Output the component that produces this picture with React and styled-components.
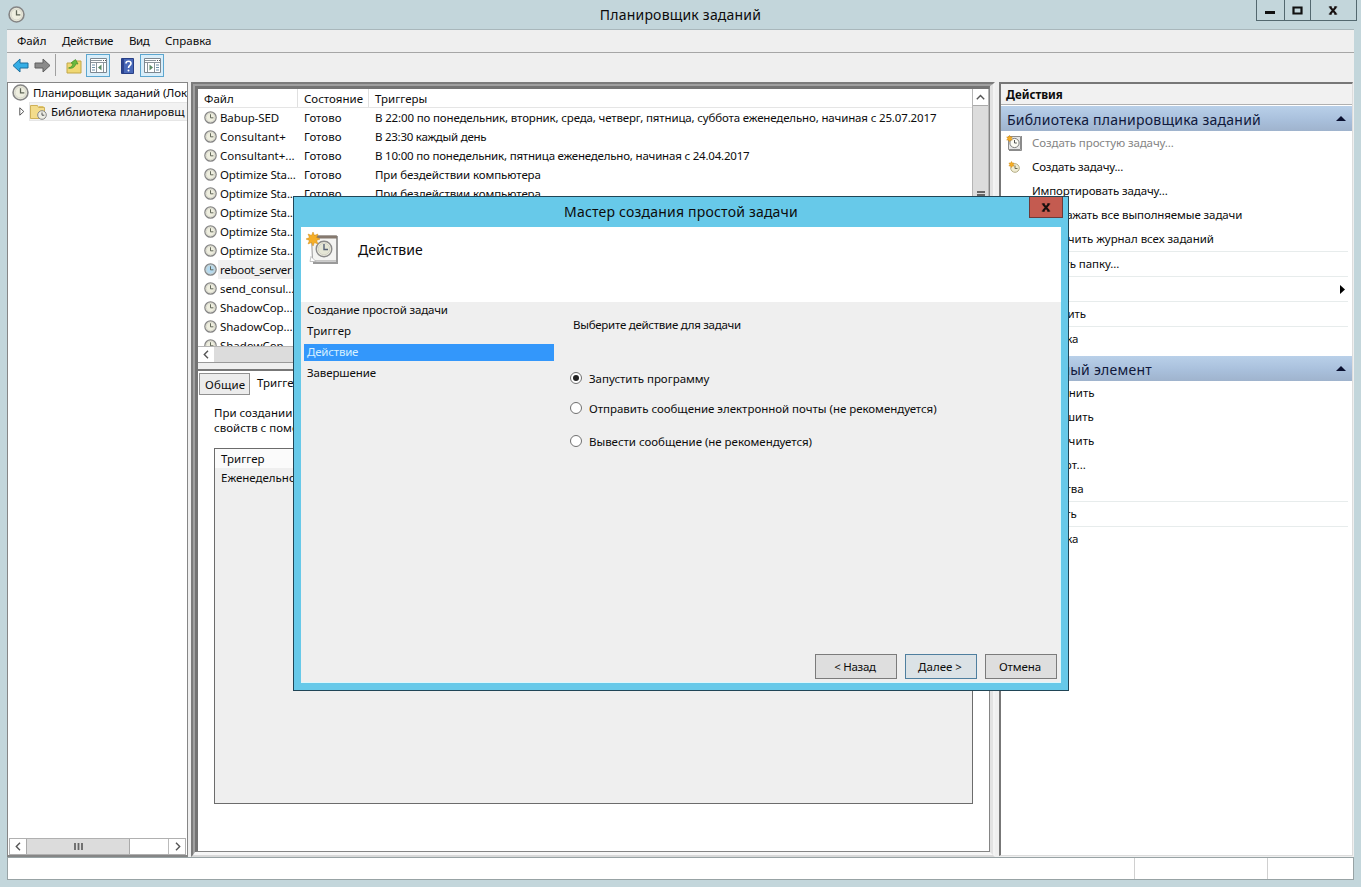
import React from 'react';
import styled, { createGlobalStyle, css } from 'styled-components';

const Global = createGlobalStyle`
  * { box-sizing: border-box; }
  html, body { margin: 0; width: 1361px; height: 887px; overflow: hidden; }
  body { font-family: 'Noto Sans', 'Open Sans', sans-serif; font-size: 11.5px; color: #0c0c0c; }
`;

const Window = styled.div`
  position: relative; width: 1361px; height: 887px; background: #c3d6db;
  padding: 0 7px 7px; overflow: hidden;
  display: flex; flex-direction: column;
`;
const TitleBar = styled.header`
  height: 29px; display: flex; flex: none; align-items: flex-start; justify-content: space-between;
`;
const TitleIcon = styled.div`width: 98px; padding: 6px 0 0 1px; line-height: 0;`;
const Title = styled.h1`
  margin: 5px 0 0; font-size: 14px; line-height: 20px; font-weight: 400; letter-spacing: 0.2px; white-space: nowrap;
`;
const Controls = styled.div`
  display: flex; height: 21px; width: 101px; margin-right: -3px; border: 1px solid #53686f; border-top: 0;
`;
const Control = styled.div`
  width: ${p => p.$w}px; height: 20px; display: flex; justify-content: center; align-items: center;
  & + & { border-left: 1px solid #53686f; }
`;
const Client = styled.div`
  width: 1347px; height: 851px; flex: none; background: #efefef;
  border-top: 1px solid #a9b7bb; display: flex; flex-direction: column;
`;
const MenuBar = styled.nav`
  height: 23px; flex: none; display: flex; padding-left: 10px; gap: 16px; line-height: 22px;
  border-bottom: 1px solid #a6a6a6;
`;
const MenuItem = styled.span`width: ${p => p.$w}px; letter-spacing: ${p => p.$ls || 0}px; white-space: nowrap;`;
const ToolBar = styled.div`
  height: 29px; flex: none; display: flex; align-items: flex-start; padding: 1px 0 0 4px;
`;
const Tool = styled.div`
  width: ${p => p.$w}px; height: 23px; display: flex; align-items: center; justify-content: center; flex: none;
  margin-right: ${p => p.$mr || 0}px;
  ${p => p.$on && css`background: #d9eefa; border: 1px solid #5ca6cf;`}
`;
const ToolRule = styled.div`width: 1px; height: 22px; background: #a0a0a0; margin-right: 10px;`;

const Panes = styled.div`height: 775px; flex: none; display: flex;`;
const Tree = styled.aside`
  width: 181px; height: 775px; flex: none; background: #fff; border: 1px solid #868686; border-bottom-width: 2px;
  display: flex; flex-direction: column; overflow: hidden;
`;
const TreeRow = styled.div`
  height: 19px; flex: none; display: flex; align-items: center; white-space: nowrap;
  padding-left: ${p => p.$indent}px; letter-spacing: ${p => p.$ls || 0}px;
  svg { flex: none; margin-right: ${p => p.$gap}px; }
`;
const TreeSel = styled.div`
  flex: 1; height: 19px; display: flex; align-items: center; background: #f2f2f2;
  border: 1px solid #e6e6e6; border-right: 0;
`;
const TreeScroll = styled.div`
  margin: auto 1px 0; height: 17px; display: flex; border: 1px solid #b0b0b0; flex: none;
`;
const ScrollArrow = styled.div`
  width: 16px; flex: none; display: flex; align-items: center; justify-content: center; background: #fff;
`;
const Thumb = styled.div`
  width: ${p => p.$w}px; background: #dcdcdc; border: solid #aaa; border-width: 0 1px;
  display: flex; align-items: center; justify-content: center;
`;
const Gap = styled.div`flex: 1; border-right: 1px solid #bbb;`;

const Frame = styled.main`
  width: 804px; height: 775px; flex: none; margin-left: 3px; background: #efefef;
  border: 2px solid; border-color: #7c7c7c #f3f3f3 #d9d9d9 #7c7c7c;
`;
const FrameMid = styled.div`
  height: 100%; border: solid; border-width: 2px 3px 3px 2px; border-color: #a0a0a0 #e2e2e2 #f6f6f6 #a0a0a0;
`;
const FrameIn = styled.div`
  height: 100%; border: solid; border-width: 3px 1px 1px 3px; border-color: #747474 #858585 #858585 #747474;
  display: flex; flex-direction: column; background: #efefef;
`;
const ListPane = styled.section`
  height: 274px; flex: none; background: #fff; display: flex; flex-direction: column;
  border-bottom: 1px solid #999;
`;
const ListTop = styled.div`height: 257px; display: flex; overflow: hidden; flex: none;`;
const Table = styled.div`width: 774px; flex: none; overflow: hidden;`;
const HeadRow = styled.div`height: 19px; display: flex; border-bottom: 1px solid #e5e5e5;`;
const HeadCell = styled.div`
  width: ${p => p.$w}px; padding-left: 6px; line-height: 19px; border-right: ${p => p.$last ? 0 : '1px solid #e0e0e0'};
  letter-spacing: ${p => p.$ls || 0}px; white-space: nowrap;
`;
const Row = styled.div`height: 19px; display: flex; align-items: center; line-height: 19px; white-space: nowrap;`;
const Cell = styled.div`
  width: ${p => p.$w}px; height: 19px; padding-left: ${p => p.$pl}px; flex: none; letter-spacing: ${p => p.$ls || 0}px;
  background: ${p => p.$sel ? '#efefef' : 'transparent'};
`;
const RowIcon = styled.div`width: 20px; height: 19px; padding: 3px 0 0 6px; line-height: 0; flex: none;`;
const VScroll = styled.div`width: 17px; background: #dcdcdc; border-left: 1px solid #b5b5b5; border-right: 1px solid #b5b5b5;`;
const VArrow = styled.div`height: 17px; background: #fff; border-bottom: 1px solid #aaa; display: flex; align-items: center; justify-content: center;`;
const VGrip = styled.div`margin: 85px auto 0; width: 8px; height: 7px; background: repeating-linear-gradient(#666 0 2px, transparent 2px 3px);`;
const HScroll = styled.div`height: 16px; display: flex; background: #dcdcdc; border-top: 1px solid #b5b5b5;`;
const DetailPane = styled.section`
  margin-top: 6px; flex: 1; background: #fff; border-top: 2px solid #777; display: flex; flex-direction: column;
`;
const Tabs = styled.div`height: 24px; display: flex; align-items: flex-end; padding-left: 1px; flex: none;`;
const Tab = styled.div`
  height: ${p => p.$active ? 24 : 22}px; line-height: ${p => p.$active ? 24 : 21}px; width: ${p => p.$w}px;
  padding-left: ${p => p.$active ? 7 : 5}px; letter-spacing: ${p => p.$ls || 0}px; white-space: nowrap;
  background: ${p => p.$active ? '#fff' : '#ececec'}; border: ${p => p.$active ? 0 : '1px solid #909090'};
`;
const Note = styled.p`margin: 10px 0 1px 16px; line-height: 15px; white-space: nowrap;`;
const Triggers = styled.div`
  margin: 12px 0 0 16px; width: 759px; height: 356px; border: 1px solid #6c6c6c; background: #efefef; line-height: 19px;
`;
const TriggerLine = styled.div`padding-left: 6px; height: 19px; background: ${p => p.$head ? '#fbfbfb' : 'none'};`;

const Actions = styled.aside`
  width: 354px; height: 774px; margin-left: 4px; flex: none; background: #fff; display: flex; flex-direction: column;
  border: solid; border-width: 2px 1px 1px 2px; border-color: #777 #ddd #ddd #777;
`;
const ActionsTitle = styled.h2`
  margin: 0; height: 21px; flex: none; padding-left: 5px; font-size: 11.5px; line-height: 22px; background: #f1f1f1; border-bottom: 1px solid #b0b0b0;
`;
const Group = styled.h3`
  margin: ${p => p.$mt}px 0 0; height: 25px; flex: none; padding: 2px 6px 0 6px; font-size: 14px; font-weight: 400; line-height: 23px;
  display: flex; justify-content: space-between; align-items: center; color: #10183a; letter-spacing: ${p => p.$ls}px;
  background: linear-gradient(#b9d0e9, #a9c0dc 55%, #9fb3cd);
  svg { margin-top: -2px; }
`;
const Action = styled.div`
  height: ${p => p.$line ? 25 : 24}px; flex: none; display: flex; align-items: center; margin-right: 4px;
  border-bottom: ${p => p.$line ? '1px solid #e7ecec' : 0}; color: ${p => p.$off ? '#858585' : '#0c0c0c'};
  letter-spacing: ${p => p.$ls || 0}px; white-space: nowrap; justify-content: space-between;
`;
const ActionText = styled.span`display: flex; align-items: center; height: 22px; line-height: 22px;`;
const ActionIcon = styled.span`width: 31px; display: inline-flex; padding-left: 5px;`;
const StatusBar = styled.footer`
  height: 23px; flex: none; background: #fff; border: 1px solid #98a3a5; display: flex; justify-content: flex-end;
`;
const StatusCell = styled.div`width: ${p => p.$w}px; border-left: 1px solid #d0d0d0;`;

const Dialog = styled.div`
  position: absolute; left: 293px; top: 196px; width: 776px; height: 495px; background: #67c9e9;
  border: 1px solid #204556; padding: 0 7px 7px; display: flex; flex-direction: column;
`;
const DialogTop = styled.div`height: 30px; flex: none; display: flex; justify-content: center;`;
const DialogClose = styled.div`
  position: absolute; right: 5px; top: 0; width: 34px; height: 21px; background: #c45b50; border: 1px solid #6d3a3a; border-top: 0;
  display: flex; align-items: center; justify-content: center;
`;
const DialogHead = styled.div`height: 75px; flex: none; background: #fff; display: flex; padding: 5px 0 0 5px;`;
const DialogHeadText = styled.h2`margin: 7px 0 0 19px; font-size: 14px; font-weight: 400; line-height: 22px; letter-spacing: 0.05px;`;
const DialogBody = styled.div`
  flex: 1; background: #efefef; display: grid; grid-template-columns: 262px 1fr; grid-template-rows: 1fr 33px;
  border: solid #dff7fb; border-width: 0 1px 1px 0;
`;
const Steps = styled.div`padding: 0 0 0 3px; display: flex; flex-direction: column;`;
const Step = styled.div`
  width: 250px; height: 17px; margin-bottom: 4px; line-height: 16px; padding-left: 3px; letter-spacing: ${p => p.$ls}px;
  ${p => p.$on && css`background: #3397fb; color: #d5f0ff;`}
`;
const Choices = styled.div`padding-top: 14px; display: flex; flex-direction: column;`;
const Prompt = styled.div`padding-left: 10px; line-height: 18px; letter-spacing: ${p => p.$ls}px;`;
const Choice = styled.label`
  display: flex; align-items: center; gap: 7px; height: 18px; line-height: 18px; margin: ${p => p.$mt}px 0 0 7px; white-space: nowrap;
  letter-spacing: -0.03px;
`;
const Radio = styled.span`
  width: 12px; height: 12px; border-radius: 50%; border: 1px solid #707070; background: #fff; margin-top: -2px;
  display: flex; align-items: center; justify-content: center;
  &::after { content: ''; width: 6px; height: 6px; border-radius: 50%; background: ${p => p.$on ? '#222' : 'transparent'}; }
`;
const Buttons = styled.div`grid-column: 1 / 3; display: flex; justify-content: flex-end; gap: 8px; padding: 5px 3px 0 0;`;
const Button = styled.button`
  width: ${p => p.$w}px; height: 25px; padding: 0 2px 0 0; font: inherit; color: #0c0c0c; border-radius: 0; letter-spacing: ${p => p.$ls || 0}px;
  border: 1px solid ${p => p.$main ? '#4f7f9f' : '#7b7b7b'}; background: ${p => p.$main ? '#dbe2e6' : '#dedede'};
`;

const Clock = ({ s = 13, face = '#eeeedf', rim = '#858585' }) => (
  <svg width={s} height={s} viewBox="0 0 16 16">
    <circle cx="8" cy="8" r="7" fill={face} stroke={rim} strokeWidth="1.5" />
    <circle cx="8" cy="8" r="5.2" fill="none" stroke="#cfcfc4" strokeWidth="0.8" />
    <path d="M8 4v4.400h3.600" fill="none" stroke="#5f6557" strokeWidth="1.200" />
  </svg>
);
const Arrow = ({ back }) => (
  <svg width="17" height="15" viewBox="0 0 17 15">
    <path d={back ? 'M1 7.500 8 1v4h8v5H8v4z' : 'M16 7.500 9 1v4H1v5h8v4z'} fill={back ? '#35aee6' : '#8a8a8a'} stroke={back ? '#1d6f9e' : '#5e5e5e'} />
  </svg>
);
const FolderUp = () => (
  <svg width="16" height="16" viewBox="0 0 16 16">
    <path d="M1 5h5l1.500-2H15v12H1z" fill="#f0d873" stroke="#c2a748" />
    <path d="M2.500 10c2.500-.5 4-2 4.500-4.500L5 5l4.500-3.500L12 6 9.800 5.800C9 9 6.500 11 2.500 10z" fill="#68bb3e" stroke="#3f8c29" strokeWidth=".7" />
  </svg>
);
const PaneIcon = ({ right }) => (
  <svg width="17" height="15" viewBox="0 0 17 15">
    <path d="M.5.5h16v14H.5z" fill="#fff" stroke="#7d8790" />
    <path d="M1 2.500h11M1 4.500h15" stroke="#8c959b" />
    <path d="M13 2.500h1M15 2.500h1" stroke="#555" />
    {right
      ? <><path d="M3.500 5v9M10.500 5v9" stroke="#8a949b" /><path d="M12 7h3M12 9.500h3M12 12h3" stroke="#6b8ea5" /><path d="M5.500 6.500v6l3.500-3z" fill="#5b8a65" /></>
      : <><path d="M6.500 5v9M13.500 5v9" stroke="#8a949b" /><path d="M2 7h3M2 9.500h3M2 12h3" stroke="#6b8ea5" /><path d="M11.500 6.500v6L8 9.500z" fill="#5b8a65" /></>}
  </svg>
);
const Help = () => (
  <svg width="13" height="16" viewBox="0 0 13 16">
    <path d="M.5.5h12v15H.5z" fill="#4868b8" stroke="#283f86" />
    <path d="M1 1h2v14H1z" fill="#2c4490" />
    <path d="M5 5.500c0-3 5-3 5 0 0 2-2.500 2-2.500 4.500" fill="none" stroke="#fff" strokeWidth="1.600" />
    <circle cx="7.500" cy="12.500" r="1" fill="#fff" />
  </svg>
);
const Library = () => (
  <svg width="17" height="16" viewBox="0 0 17 16">
    <path d="M.5 1.500h7l1 2h6v11H.5z" fill="#f3dc8b" stroke="#cfb158" />
    <path d="M9 2.500h4.500" stroke="#dfc46b" />
    <circle cx="12" cy="11" r="4.300" fill="#eeeee6" stroke="#858585" />
    <path d="M12 8.500V11.200h2.300" fill="none" stroke="#555" />
  </svg>
);
const Star = ({ x, y, r, n = 8 }) => {
  const pts = Array.from({ length: n * 2 }, (_, i) => {
    const a = (Math.PI * i) / n;
    const q = i % 2 ? r * 0.55 : r;
    return `${x + q * Math.sin(a)},${y - q * Math.cos(a)}`;
  }).join(' ');
  return <polygon points={pts} fill="#f5ae27" stroke="#d18b14" strokeWidth=".5" />;
};
const TaskIcon = () => (
  <svg width="33" height="33" viewBox="0 0 33 33">
    <path d="M7 31h24V4" fill="none" stroke="#9a9a9a" strokeWidth="2" />
    <path d="M5.500 4h25v25h-24z" fill="#f4f4f2" stroke="#999" />
    <path d="M6 3.500h25v3H6z" fill="#85796e" />
    <path d="M5 24.500l5 5H4z" fill="#fff" stroke="#aaa" strokeWidth=".7" />
    <circle cx="18" cy="17" r="7.800" fill="#efeee0" stroke="#8a8a8a" strokeWidth="1.400" />
    <circle cx="18" cy="17" r="5.800" fill="#e5e6d5" stroke="#c5c5b8" strokeWidth=".6" />
    <path d="M18 12v5.500h4" fill="none" stroke="#566075" strokeWidth="1.400" />
    <Star x={7} y={7} r={7} n={8} />
  </svg>
);
const SmallTask = () => (
  <svg width="17" height="17" viewBox="0 0 17 17">
    <path d="M2.500 1.500h12v13h-12z" fill="#e6e6e6" stroke="#8b8b8b" />
    <path d="M15.500 1v14.500H3" fill="none" stroke="#8b8b8b" />
    <circle cx="8.500" cy="8" r="4.600" fill="#fbfbf4" stroke="#7d7d7d" />
    <path d="M8.500 5v3h2.300" fill="none" stroke="#555" />
    <Star x={3.5} y={3.5} r={3.2} n={6} />
  </svg>
);
const NewTask = () => (
  <svg width="17" height="16" viewBox="0 0 17 16">
    <circle cx="9" cy="9" r="4.300" fill="#f0ecd2" stroke="#b4ad86" />
    <path d="M9 6.500v3h2.500" fill="none" stroke="#6b6b55" />
    <Star x={5.500} y={5.500} r={3} n={6} />
  </svg>
);
const Chevron = ({ dir }) => (
  <svg width="9" height="9" viewBox="0 0 9 9">
    <path d={{ left: 'M6 .8 2.300 4.500 6 8.200', right: 'M3 .8 6.700 4.500 3 8.200', up: 'M.8 6.300 4.500 2.600 8.200 6.300' }[dir]} fill="none" stroke="#555" strokeWidth="1.400" />
  </svg>
);
const Cross = () => (
  <svg width="10" height="9" viewBox="0 0 10 9">
    <path d="M2 1l6 7M8 1l-6 7" stroke="#17100f" strokeWidth="2" />
    <path d="M.8.9h3M6.200.9h3M.8 8.100h3M6.200 8.100h3" stroke="#17100f" />
  </svg>
);
const Triangle = ({ right }) => right
  ? <svg width="8" height="9" viewBox="0 0 8 9"><path d="M0 0v9l5-4.500z" fill="#000" /></svg>
  : <svg width="10" height="5" viewBox="0 0 10 5"><path d="M0 5h10L5 0z" fill="#0a1030" /></svg>;
const Grip = () => <svg width="9" height="7" viewBox="0 0 9 7"><path d="M1 0v7M4.500 0v7M8 0v7" stroke="#666" strokeWidth="1.800" /></svg>;

const tasks = [
  ['Babup-SED', -0.1, 'В 22:00 по понедельник, вторник, среда, четверг, пятница, суббота еженедельно, начиная с 25.07.2017', -0.15],
  ['Consultant+', 0.05, 'В 23:30 каждый день', -0.25],
  ['Consultant+...', 0, 'В 10:00 по понедельник, пятница еженедельно, начиная с 24.04.2017', -0.2],
  ['Optimize Sta...', -0.15, 'При бездействии компьютера', -0.1],
  ['Optimize Sta...', -0.15, 'При бездействии компьютера', -0.1],
  ['Optimize Sta...', -0.15], ['Optimize Sta...', -0.15], ['Optimize Sta...', -0.15],
  ['reboot_server', -0.28], ['send_consul...', -0.1], ['ShadowCop...', -0.05], ['ShadowCop...', -0.05], ['ShadowCop...', -0.05],
];
const libraryActions = [
  { t: 'Создать простую задачу...', off: true, icon: <SmallTask />, ls: -0.1 },
  { t: 'Создать задачу...', icon: <NewTask />, ls: -0.2 },
  { t: 'Импортировать задачу...', ls: -0.13 },
  { t: 'Отображать все выполняемые задачи', ls: -0.1 },
  { t: 'Отключить журнал всех заданий', line: true, ls: -0.04 },
  { t: 'Создать папку...', line: true, ls: -0.1 },
  { t: '', line: true, more: true },
  { t: 'Обновить', line: true, ls: -0.1 },
  { t: 'Справка' },
];
const itemActions = [
  { t: 'Выполнить' }, { t: 'Завершить' }, { t: 'Отключить', ls: 0.1 }, { t: 'Экспорт...' },
  { t: 'Свойства', line: true }, { t: 'Удалить', line: true }, { t: 'Справка' },
];
const ActionList = ({ items }) => items.map((a, i) => (
  <Action key={i} $line={a.line} $off={a.off} $ls={a.ls}>
    <ActionText><ActionIcon>{a.icon}</ActionIcon>{a.t}</ActionText>
    {a.more && <Triangle right />}
  </Action>
));

export default function App() {
  return (
    <>
      <Global />
      <Window>
        <TitleBar>
          <TitleIcon><Clock s={17} /></TitleIcon>
          <Title>Планировщик заданий</Title>
          <Controls>
            <Control $w={27}><svg width="10" height="8"><path d="M0 6.500h10" stroke="#111" strokeWidth="3" /></svg></Control>
            <Control $w={26}><svg width="11" height="9"><path d="M1.500 1.500h8v6h-8z" fill="none" stroke="#111" strokeWidth="2.200" /></svg></Control>
            <Control $w={46}><Cross /></Control>
          </Controls>
        </TitleBar>
        <Client>
          <MenuBar>
            <MenuItem $w={29} $ls={-0.1}>Файл</MenuItem>
            <MenuItem $w={51} $ls={-0.2}>Действие</MenuItem>
            <MenuItem $w={20} $ls={-0.4}>Вид</MenuItem>
            <MenuItem $w={47}>Справка</MenuItem>
          </MenuBar>
          <ToolBar>
            <Tool $w={18} $mr={4}><Arrow back /></Tool>
            <Tool $w={18} $mr={4}><Arrow /></Tool>
            <ToolRule />
            <Tool $w={16} $mr={4}><FolderUp /></Tool>
            <Tool $w={24} $mr={10} $on><PaneIcon /></Tool>
            <Tool $w={15} $mr={5}><Help /></Tool>
            <Tool $w={24} $on><PaneIcon right /></Tool>
          </ToolBar>
          <Panes>
            <Tree>
              <TreeRow $indent={4} $gap={4} $ls={-0.12}><Clock s={17} />Планировщик заданий (Лок</TreeRow>
              <TreeRow $indent={11} $gap={4}>
                <svg width="6" height="9" viewBox="0 0 6 9"><path d="M.8.8v7.400l4-3.700z" fill="#fff" stroke="#555" /></svg>
                <TreeSel><Library />Библиотека планировщ</TreeSel>
              </TreeRow>
              <TreeScroll>
                <ScrollArrow><Chevron dir="left" /></ScrollArrow>
                <Thumb $w={104}><Grip /></Thumb>
                <Gap />
                <ScrollArrow><Chevron dir="right" /></ScrollArrow>
              </TreeScroll>
            </Tree>
            <Frame><FrameMid><FrameIn>
              <ListPane>
                <ListTop>
                  <Table>
                    <HeadRow>
                      <HeadCell $w={100}>Файл</HeadCell>
                      <HeadCell $w={71}>Состояние</HeadCell>
                      <HeadCell $w={603} $last>Триггеры</HeadCell>
                    </HeadRow>
                    {tasks.map(([name, ls, when, whenLs], i) => (
                      <Row key={i}>
                        <RowIcon><Clock face={i === 8 ? '#b5daf0' : undefined} /></RowIcon>
                        <Cell $w={80} $pl={2} $sel={i === 8} $ls={ls}>{name}</Cell>
                        {when && <Cell $w={71} $pl={6}>Готово</Cell>}
                        {when && <Cell $w={603} $pl={6} $ls={whenLs}>{when}</Cell>}
                      </Row>
                    ))}
                  </Table>
                  <VScroll><VArrow><Chevron dir="up" /></VArrow><VGrip /></VScroll>
                </ListTop>
                <HScroll><ScrollArrow><Chevron dir="left" /></ScrollArrow></HScroll>
              </ListPane>
              <DetailPane>
                <Tabs>
                  <Tab $w={51} $ls={0.2}>Общие</Tab>
                  <Tab $w={70} $active>Триггеры</Tab>
                </Tabs>
                <Note>При создании<br />свойств с помощью</Note>
                <Triggers>
                  <TriggerLine $head>Триггер</TriggerLine>
                  <TriggerLine>Еженедельно</TriggerLine>
                </Triggers>
              </DetailPane>
            </FrameIn></FrameMid></Frame>
            <Actions>
              <ActionsTitle>Действия</ActionsTitle>
              <Group $mt={1} $ls={0.24}>Библиотека планировщика заданий<Triangle /></Group>
              <ActionList items={libraryActions} />
              <Group $mt={5} $ls={0.24}>Выбранный элемент<Triangle /></Group>
              <ActionList items={itemActions} />
            </Actions>
          </Panes>
          <StatusBar>
            <StatusCell $w={133} /><StatusCell $w={86} />
          </StatusBar>
        </Client>
        <Dialog>
          <DialogTop><Title>Мастер создания простой задачи</Title></DialogTop>
          <DialogClose><Cross /></DialogClose>
          <DialogHead><TaskIcon /><DialogHeadText>Действие</DialogHeadText></DialogHead>
          <DialogBody>
            <Steps>
              <Step $ls={-0.17}>Создание простой задачи</Step>
              <Step $ls={0.1}>Триггер</Step>
              <Step $on $ls={-0.2}>Действие</Step>
              <Step $ls={-0.1}>Завершение</Step>
            </Steps>
            <Choices>
              <Prompt $ls={-0.27}>Выберите действие для задачи</Prompt>
              <Choice $mt={36}><Radio $on />Запустить программу</Choice>
              <Choice $mt={12}><Radio />Отправить сообщение электронной почты (не рекомендуется)</Choice>
              <Choice $mt={15}><Radio />Вывести сообщение (не рекомендуется)</Choice>
            </Choices>
            <Buttons>
              <Button $w={82} $ls={-0.3}>&lt; Назад</Button>
              <Button $w={72} $main>Далее &gt;</Button>
              <Button $w={72} $ls={-0.1}>Отмена</Button>
            </Buttons>
          </DialogBody>
        </Dialog>
      </Window>
    </>
  );
}
